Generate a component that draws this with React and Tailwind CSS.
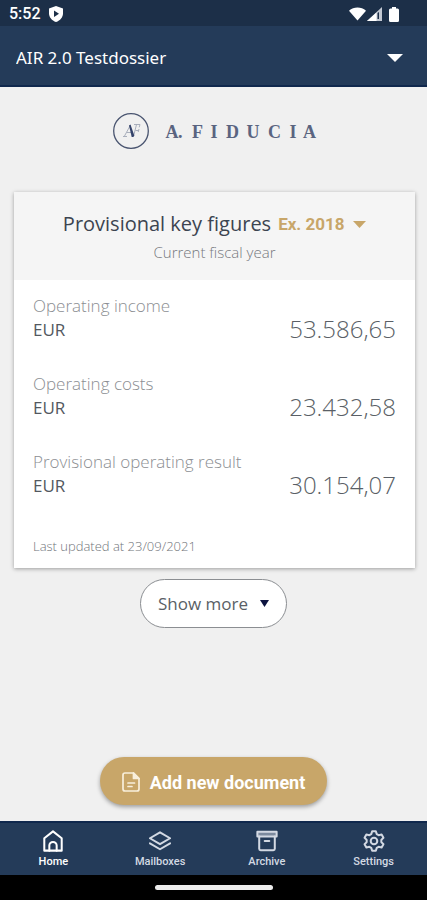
import { useState } from "react";

const figures = [
  { label: "Operating income", currency: "EUR", value: "53.586,65" },
  { label: "Operating costs", currency: "EUR", value: "23.432,58" },
  { label: "Provisional operating result", currency: "EUR", value: "30.154,07" },
];

function Caret({ className }) {
  return (
    <svg viewBox="0 0 16 8" preserveAspectRatio="none" className={className} fill="currentColor" aria-hidden="true">
      <path d="M0 0h16L8 8z" />
    </svg>
  );
}

function StatusBar() {
  return (
    <div className="flex h-[26px] items-center justify-between bg-[#1c2f48] pt-0.5 pr-7 pl-[9px] text-white">
      <div className="flex items-center gap-2">
        <span className="font-['Roboto',sans-serif] text-base leading-5 font-medium">5:52</span>
        <svg viewBox="0 0 14 16" className="h-4 w-3.5" aria-hidden="true">
          <path d="M7 0l7 2.6v4.6c0 4-2.8 7.3-7 8.8-4.200-1.500-7-4.800-7-8.800V2.600z" fill="#fff" />
          <path d="M5 4.600l5 3.200-5 3.200z" fill="#1c2f48" />
        </svg>
      </div>
      <div className="flex items-center">
        <svg viewBox="0 0 18 14" className="h-3.5 w-[17px]" fill="#fff" aria-hidden="true">
          <path d="M0 3.500C5-1 13-1 18 3.500L9 14z" />
        </svg>
        <svg viewBox="0 0 15 14" className="ml-px h-3.5 w-[15px]" aria-hidden="true">
          <path d="M15 0v14H0z" fill="#c3c9d3" />
          <path d="M9.500 5.500V14H0z" fill="#fff" />
          <path d="M10.500 6v6h1.500V5z" fill="#1c2f48" />
        </svg>
        <svg viewBox="0 0 10 15" className="ml-[7px] h-[15px] w-2.5" fill="#fff" aria-hidden="true">
          <path d="M3 0h4v1.500h1.500Q10 1.500 10 3v10.500Q10 15 8.500 15h-7Q0 15 0 13.500V3q0-1.500 1.500-1.500H3z" />
        </svg>
      </div>
    </div>
  );
}

function DossierPicker() {
  return (
    <header className="grid h-[61px] items-center border-b-2 border-[#10284d] bg-[#243b59] pt-1 text-white">
      <select
        aria-label="Dossier"
        className="col-start-1 row-start-1 h-full w-full appearance-none bg-transparent px-4 font-['Noto_Sans',sans-serif] text-[17px] outline-none"
      >
        <option>AIR 2.0 Testdossier</option>
      </select>
      <Caret className="pointer-events-none col-start-1 row-start-1 mr-6 h-2 w-4 justify-self-end" />
    </header>
  );
}

function Logo() {
  return (
    <svg viewBox="0 0 206 38" className="mx-auto h-[38px] w-[206px]" role="img" aria-label="A. Fiducia">
      <circle cx="20" cy="19" r="17.300" fill="none" stroke="#4a5570" strokeWidth="1.300" />
      {/* monogram */}
      <g fill="none" stroke="#a0a7b6" strokeWidth="0.900">
        <path d="M12 24.500h4M13.500 24l6-11M16 20.500h5" />
        <path d="M22.500 24.500l3-12M23 12.500h6l-.8 2.800M24.500 18.500h3M28 17l-.8 3" />
      </g>
      <path d="M18 13.500l1.500-1 3.800 11-1 1.500h-1.600z" fill="#33426a" />
      <text
        x="54.500 67 81 99.500 115 135.500 157 178.500 192"
        y="25.500"
        fill="#5a6480"
        fontSize="18"
        fontWeight="700"
        fontFamily="Liberation Serif, serif"
      >
        A.FIDUCIA
      </text>
    </svg>
  );
}

function FiguresCard() {
  return (
    <section className="mr-3 ml-[14px] mt-[42px] bg-white shadow-[0_1px_4px_rgba(0,0,0,0.35)]">
      <div className="h-[88px] bg-[#f5f5f5] pt-[18px] text-center">
        <div className="flex items-center justify-center gap-[7px]">
          <h1 className="text-xl leading-7 text-[#3c4450]">Provisional key figures</h1>
          <div className="flex items-center gap-2 text-[#c8a669]">
            <select
              aria-label="Fiscal year"
              className="appearance-none bg-transparent font-['Roboto',sans-serif] text-[17px] leading-7 font-bold outline-none"
            >
              <option>Ex. 2018</option>
            </select>
            <Caret className="pointer-events-none h-[7px] w-[13px]" />
          </div>
        </div>
        <p className="mt-0.5 text-[15px] leading-6 font-light text-[#75787d]">Current fiscal year</p>
      </div>

      <dl className="px-[19px] pt-[14px]">
        {figures.map((item) => (
          <div key={item.label} className="h-[78px]">
            <dt className="text-[17px] leading-6 font-light text-[#8b8e92]">{item.label}</dt>
            <dd className="flex items-start justify-between">
              <span className="text-[17px] leading-6 text-[#53585f]">{item.currency}</span>
              <span className="text-2xl leading-[22px] font-light text-[#5a5f66]">{item.value}</span>
            </dd>
          </div>
        ))}
      </dl>
      <p className="px-[19px] pt-2 pb-3 text-[13px] leading-5 font-light text-[#707479]">
        Last updated at 23/09/2021
      </p>
    </section>
  );
}

const tabs = [
  {
    name: "Home",
    icon: (
      <>
        <path d="M2.500 9L12 1.500 21.500 9v13.500h-19z" />
        <path d="M8 22.500V17a4 4 0 0 1 8 0v5.500" />
      </>
    ),
  },
  {
    name: "Mailboxes",
    icon: (
      <>
        <path d="M12 2.500l11 6.500-11 6.500L1 9z" />
        <path d="M1 14.500L12 21l11-6.500" />
      </>
    ),
  },
  {
    name: "Archive",
    icon: (
      <>
        <path d="M1.500 2h21v5h-21z" fill="currentColor" fillOpacity="0.5" />
        <path d="M3.500 7v13.500q0 1.500 1.500 1.500h14q1.500 0 1.500-1.500V7M9.500 12h5" />
      </>
    ),
  },
  {
    name: "Settings",
    icon: (
      <>
        <circle cx="12" cy="12" r="3.600" />
        <path d="M9 4.500L10 1.300h4l1 3.200 2 1.200 3.300-.8 2 3.500L20 10.800v2.400l2.300 2.400-2 3.500-3.300-.8-2 1.200-1 3.200h-4l-1-3.200-2-1.200-3.300.8-2-3.500L4 13.200v-2.400L1.700 8.400l2-3.500 3.300.8z" />
      </>
    ),
  },
];

function TabBar({ active, onChange }) {
  return (
    <nav className="grid h-[54px] grid-cols-4 border-t-2 border-[#10284d] bg-[#243b59] font-['Roboto',sans-serif]">
      {tabs.map((tab) => (
        <button
          key={tab.name}
          type="button"
          onClick={() => onChange(tab.name)}
          className={`flex flex-col items-center gap-0.5 pt-[7px] ${active === tab.name ? "text-white" : "text-[#d3d9e3]"}`}
        >
          <svg
            viewBox="0 0 24 24"
            className="size-[22px]"
            fill="none"
            stroke="currentColor"
            strokeWidth="2.200"
            strokeLinejoin="round"
            strokeLinecap="round"
            aria-hidden="true"
          >
            {tab.icon}
          </svg>
          <span className="text-[11px] leading-4 font-medium">{tab.name}</span>
        </button>
      ))}
    </nav>
  );
}

export default function App() {
  const [tab, setTab] = useState("Home");

  return (
    <div className="flex min-h-screen flex-col bg-[#f0f0f0] font-['Open_Sans',sans-serif]">
      <StatusBar />
      <DossierPicker />

      <main className="flex flex-1 flex-col pt-[25px] pb-4">
        <Logo />
        <FiguresCard />
        <button
          type="button"
          className="mx-auto mt-[11px] flex h-[49px] items-center gap-3 rounded-full border border-[#8b8e92] bg-white px-[17px] text-[17px] text-[#5a5f66]"
        >
          Show more
          <Caret className="h-[7px] w-[9px] text-[#0d1440]" />
        </button>

        <button
          type="button"
          className="mx-auto mt-auto flex h-12 items-center gap-2.5 rounded-full bg-[#c8a669] px-[22px] pt-0.5 font-['Roboto',sans-serif] text-[18px] font-bold text-white shadow-[0_2px_4px_rgba(0,0,0,0.35)]"
        >
          <svg
            viewBox="0 0 18 20"
            className="h-5 w-[18px]"
            fill="none"
            stroke="#f8efdc"
            strokeWidth="1.700"
            strokeLinejoin="round"
            strokeLinecap="round"
            aria-hidden="true"
          >
            <path d="M3 1h8.500L17 6.500V17q0 2-2 2H3q-2 0-2-2V3q0-2 2-2z" />
            <path d="M11.500 1v5.500H17z" fill="#f8efdc" />
            <path d="M6 11h6.500M6 14.500h4" />
          </svg>
          Add new document
        </button>
      </main>

      <TabBar active={tab} onChange={setTab} />
      <div className="flex h-[25px] items-center justify-center bg-black">
        <div className="h-[5px] w-[118px] rounded-full bg-[#ececec]" />
      </div>
    </div>
  );
}
